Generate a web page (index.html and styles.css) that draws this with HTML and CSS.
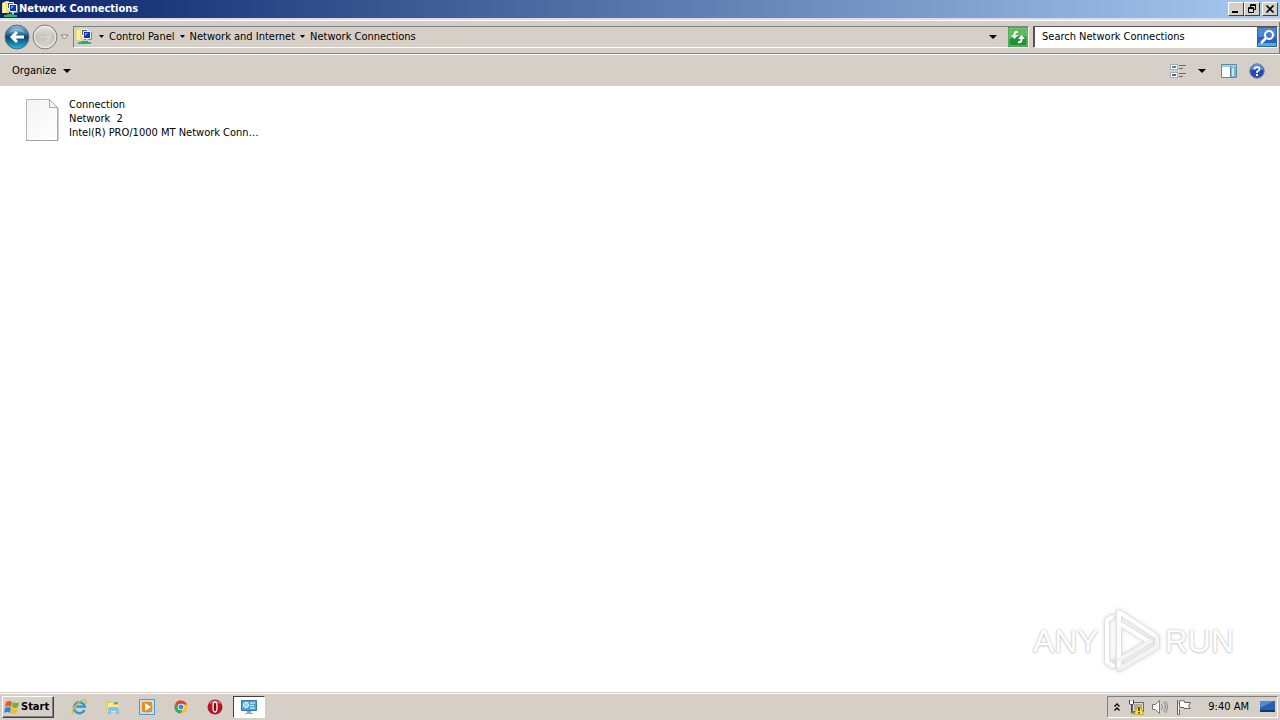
FILE: index.html
```html
<!DOCTYPE html>
<html lang="en">
<head>
<meta charset="utf-8">
<title>Network Connections</title>
<link rel="stylesheet" href="styles.css">
</head>
<body>
<svg class="defs" aria-hidden="true">
  <defs>
    <linearGradient id="blue" x1="0" y1="0" x2="0" y2="1"><stop offset="0" stop-color="#8fb9cf"/><stop offset=".35" stop-color="#2f78a8"/><stop offset=".5" stop-color="#07456f"/><stop offset="1" stop-color="#27b9e0"/></linearGradient>
    <linearGradient id="grey" x1="0" y1="0" x2="0" y2="1"><stop offset="0" stop-color="#e9e8e5"/><stop offset=".5" stop-color="#c3c0bb"/><stop offset="1" stop-color="#dddbd7"/></linearGradient>
    <linearGradient id="paper" x1="0" y1="0" x2="1" y2="1"><stop offset="0" stop-color="#f3f3f3"/><stop offset="1" stop-color="#ffffff"/></linearGradient>
    <symbol id="net" viewBox="0 0 16 17">
      <path d="M0 2 4 0h3v12H0z" fill="#f0dc74"/><path d="M1 2h3v10H1z" fill="#fdf1a0"/>
      <path d="M5.500 1.500h6v6h-6z" fill="#3657c8" stroke="#eef2fa"/>
      <path d="M7.500 3.500h7v7h-7z" fill="#1534b4" stroke="#f2f4fa"/><path d="M9 5h3L9 8z" fill="#6fa0ee"/>
      <path d="M15.500 4v7.500H8" fill="none" stroke="#7787a5"/>
      <path d="M10 11h2v2h-2z" fill="#c9d0d8"/><path d="M2 14h13v2H2z" fill="#39a891"/><path d="M5 13h7v3H5z" fill="#22b45c"/>
    </symbol>
  </defs>
</svg>
<div class="window">
  <header class="titlebar">
    <svg class="title-icon" viewBox="0 0 16 17"><use href="#net"/></svg>
    <h1 class="title">Network Connections</h1>
    <div class="caption">
      <button class="cap" aria-label="Minimize"><svg viewBox="0 0 12 10"><path d="M2 7h6v2H2z"/></svg></button>
      <button class="cap" aria-label="Restore"><svg viewBox="0 0 12 10"><path d="M4.500 3V.5h5v5H8M4 1.500h6" fill="none" stroke="#000"/><path d="M2.500 3.500h5v5h-5zM2 4.500h6" fill="none" stroke="#000"/></svg></button>
      <button class="cap close" aria-label="Close"><svg viewBox="0 0 12 10"><path d="m2.500 1.500 7 7m0-7-7 7" fill="none" stroke="#000" stroke-width="1.600"/></svg></button>
    </div>
  </header>
  <div class="navbar">
    <div class="history">
      <button class="round" aria-label="Back"><svg viewBox="0 0 26 26"><circle cx="13" cy="13" r="12" fill="url(#blue)" stroke="#536d80"/><path d="M5 9a9 9 0 0 1 16 0q-8-3-16 0z" fill="#b9d4e2" opacity=".45"/><path d="M20 13H8m5-5-5 5 5 5" fill="none" stroke="#fff" stroke-width="3"/></svg></button>
      <button class="round" aria-label="Forward"><svg viewBox="0 0 26 26"><circle cx="13" cy="13" r="12" fill="url(#grey)" stroke="#817e7b"/><circle cx="13" cy="13" r="10.500" fill="none" stroke="#efeeec"/><path d="M7 13h12m-5-5 5 5-5 5" fill="none" stroke="#d6d3cf" stroke-width="2"/></svg></button>
      <button class="recent" aria-label="Recent pages"><svg viewBox="0 0 9 6"><path d="M1 1h7L4.500 5z" fill="#f5f4f2" stroke="#85827d"/></svg></button>
    </div>
    <nav class="address" aria-label="Address">
      <svg class="title-icon" viewBox="0 0 16 17"><use href="#net"/></svg>
      <svg class="crumb-arrow first" viewBox="0 0 5 3"><path d="M0 0h5L2.500 3z"/></svg>
      <a class="crumb" href="#">Control Panel</a>
      <svg class="crumb-arrow" viewBox="0 0 5 3"><path d="M0 0h5L2.500 3z"/></svg>
      <a class="crumb" href="#">Network and Internet</a>
      <svg class="crumb-arrow" viewBox="0 0 5 3"><path d="M0 0h5L2.500 3z"/></svg>
      <a class="crumb" href="#">Network Connections</a>
      <button class="drop" aria-label="Previous locations"><svg viewBox="0 0 8 4"><path d="M0 0h8L4 4z"/></svg></button>
      <button class="refresh" aria-label="Refresh"><svg viewBox="0 0 20 20"><path d="M0 0h20v20H0z" fill="#229238"/><path d="M1 1h18v9q-9-2-18 2z" fill="#5abb5f"/><path d="M1 1h18v18H1z" fill="none" stroke="#7dc67e"/><path d="M10 5Q6 4 6.500 9" fill="none" stroke="#fff" stroke-width="2"/><path d="m3 8 3.500 4L10 8z" fill="#fff"/><path d="M10 15q4 1 3.500-4" fill="none" stroke="#fff" stroke-width="2"/><path d="m10 12 3.500-4 3.500 4z" fill="#fff"/></svg></button>
    </nav>
    <form class="search">
      <input class="search-input" type="text" aria-label="Search Network Connections" placeholder="Search Network Connections">
      <button class="search-btn" type="button" aria-label="Search"><svg viewBox="0 0 20 20"><path d="M0 0h20v20H0z" fill="#2b62bd"/><path d="M1 1h18v9H1z" fill="#4e85d3"/><path d="M1 16h18v3H1z" fill="#42b1e4"/><circle cx="12" cy="8" r="4" fill="#477bd0" stroke="#fff" stroke-width="2"/><path d="m9 11-5 5" stroke="#fff" stroke-width="2.500"/></svg></button>
    </form>
  </div>
  <div class="toolbar">
    <button class="organize">Organize <svg class="arrow" viewBox="0 0 8 4"><path d="M0 0h8L4 4z"/></svg></button>
    <div class="tools">
      <button class="tool" aria-label="Change your view"><svg class="ic16" viewBox="0 0 16 16"><path d="M.5 1.500h7v5h-7zM.5 9.500h7v5h-7z" fill="#fff" stroke="#a3acb8"/><path d="M2 3h4v2H2z" fill="#4b83b2"/><path d="M2 11h4v2H2z" fill="#596579"/><path d="M9 2.500h7M9 5.500h4M9 10.500h7M9 13.500h4" stroke="#6f6c6a"/></svg></button>
      <button class="tool view-more" aria-label="More view options"><svg class="arrow" viewBox="0 0 8 4"><path d="M0 0h8L4 4z"/></svg></button>
      <button class="tool" aria-label="Show the preview pane"><svg class="ic16" viewBox="0 0 16 16"><path d="M.5 1.500h15v13H.5z" fill="#fff" stroke="#5789a8"/><path d="M1 2h14v2H1z" fill="#a9cde0"/><path d="M10 4h5v10h-5z" fill="#77b6d8"/><path d="M11 5h2v8h-2z" fill="#c7e5f4"/><path d="M9.500 3v12" stroke="#5789a8"/></svg></button>
      <button class="tool" aria-label="Get help"><svg class="ic16" viewBox="0 0 16 16"><circle cx="8" cy="8" r="7.200" fill="#234bac" stroke="#777e99"/><path d="M2 7a6 6 0 0 1 12 0Q8 5 2 7z" fill="#6b90dc"/><path d="M5.500 6.500Q5.500 4 8 4t2.500 2.200Q10.500 7.500 8 8.500V10" fill="none" stroke="#fff" stroke-width="1.700"/><path d="M7 11h2v2H7z" fill="#fff"/></svg></button>
    </div>
  </div>
  <main class="content">
    <a class="item" href="#">
      <svg class="file" viewBox="0 0 34 44"><path d="M1.500 1.500h23l8 8v33h-31z" fill="url(#paper)" stroke="#b5b5b5"/><path d="M1 42.500h32V10" fill="none" stroke="#a2a2a2"/><path d="M24.500 1.500v8h8z" fill="#f4f4f4" stroke="#a9a9a9"/></svg>
      <span class="lines"><span>Connection</span><span>Network&nbsp; 2</span><span>Intel(R) PRO/1000 MT Network Conn…</span></span>
    </a>
    <div class="watermark">
      <span class="word">ANY</span>
      <svg class="play" viewBox="0 0 60 66"><g fill="none" stroke-linejoin="round" stroke-linecap="round"><path id="play-lines" d="M10 9 5 12v42l6 4M17 58V4l38 25M17 15l29 18M17 61l38-22V29M13 54l36-21" stroke="#e0e0e0" stroke-width="6"/><path d="M10 9 5 12v42l6 4M17 58V4l38 25M17 15l29 18" stroke="#fff" stroke-width="4"/><path d="M17 61l38-22V29M17 52l32-19" stroke="#f4f4f4" stroke-width="4"/></g></svg>
      <span class="word">RUN</span>
    </div>
  </main>
  <footer class="taskbar">
    <button class="start"><svg class="ic16" viewBox="0 0 16 16"><path d="M2 3q3-2 6 0L7 8Q4 6 1 8z" fill="#ed5a24"/><path d="M9 3q3 2 6 0l-1 5q-3 2-6 0z" fill="#76b52b"/><path d="M1 9q3-2 6 0l-1 5q-3-2-6 0z" fill="#278cd5"/><path d="M8 9q3 2 6 0l-1 5q-3 2-6 0z" fill="#f8bd24"/></svg>Start</button>
    <div class="launch">
      <button class="app" aria-label="Internet Explorer"><svg class="ic16" viewBox="0 0 16 16"><path d="M13.500 11a5.500 5.500 0 1 1 .3-3.500H5" fill="none" stroke="#299bd8" stroke-width="2.400"/><path d="M2 15C-1 12 9 0 14 1q2 1 0 4" fill="none" stroke="#e6b838" stroke-width="1.400"/></svg></button>
      <button class="app" aria-label="File Explorer"><svg class="ic16" viewBox="0 0 16 16"><path d="M1 2h5l1 2h7v9H1z" fill="#e7ca65"/><path d="M3 4h5v2h6v7H2z" fill="#faeaa4"/><path d="M9 3h4v2H9z" fill="#67b74f"/><path d="M3 15v-5q0-2 2-2h7q2 0 2 2v5h-3v-3H6v3z" fill="#7fc5e8"/></svg></button>
      <button class="app" aria-label="Media Player"><svg class="ic16" viewBox="0 0 16 16"><path d="M.5.5h15v15H.5z" fill="#c5e1f2" stroke="#4b98ca"/><path d="M3 3h10v10H3z" fill="#ef8d20"/><circle cx="8" cy="8" r="5.500" fill="#f18b18"/><path d="m6 4 6 4-6 4z" fill="#fff"/></svg></button>
      <button class="app" aria-label="Chrome"><svg class="ic16" viewBox="0 0 16 16"><circle cx="8" cy="8" r="6.500" fill="#f5c52c"/><path d="M2.400 4.500A6.500 6.500 0 0 1 14 5.500H8L5 9z" fill="#db4437"/><path d="M2.400 4.500A6.500 6.500 0 0 0 7.500 14.500L10 10H6z" fill="#3da558"/><circle cx="8" cy="8" r="3.300" fill="#fff"/><circle cx="8" cy="8" r="2.500" fill="#4285dc"/></svg></button>
      <button class="app" aria-label="Opera"><svg class="ic16" viewBox="0 0 16 16"><circle cx="8" cy="8" r="7.500" fill="#b51622"/><path d="M2 5a7 7 0 0 1 12 0Q8 3 2 5z" fill="#e56a6c"/><ellipse cx="8" cy="8" rx="2" ry="5" fill="#7b0c13" stroke="#fff" stroke-width="1.300"/></svg></button>
      <button class="app active" aria-label="Network Connections"><svg class="ic16" viewBox="0 0 16 16"><path d="M.5 1.500h15v10H.5z" fill="#48a3d8" stroke="#3479a9"/><circle cx="5" cy="6" r="2.500" fill="#8acdf0" stroke="#fff"/><path d="M9 4h5M9 6.500h4M9 9h5" stroke="#fff"/><path d="M6 12h4v2h2v1H4v-1h2z" fill="#83abc4"/></svg></button>
    </div>
    <div class="tray">
      <button class="mini" aria-label="Show hidden icons"><svg class="chev" viewBox="0 0 6 8"><path d="M.5 3.500 3 1l2.500 2.500M.5 7.500 3 5l2.500 2.500" fill="none" stroke="#000" stroke-width="1.300"/></svg></button>
      <button class="mini" aria-label="Network status"><svg class="ic16" viewBox="0 0 16 16"><path d="M4.500 3.500h11v9h-11z" fill="#ddd" stroke="#666"/><path d="M6 5h8v6H6z" fill="#aaa"/><path d="M1.500 1v4h4V1M3.500 5v9H8" fill="none" stroke="#444"/><path d="M2 2h3v3H2z" fill="#fff"/><path d="m11 5 5 10.500H6z" fill="#f8df35" stroke="#b59a13" stroke-width=".6"/><path d="M11 8v4m0 1v1.500" stroke="#222" stroke-width="1.400"/></svg></button>
      <button class="mini" aria-label="Volume"><svg class="ic16" viewBox="0 0 16 16"><path d="M.5 5.500h3l4-4v13l-4-4h-3z" fill="#fff" stroke="#777"/><path d="M9.500 5q2 3 0 6M11.500 3q4 5 0 10M13.500 2q4 6 0 12" fill="none" stroke="#888"/></svg></button>
      <button class="mini" aria-label="Action Center"><svg class="ic16" viewBox="0 0 16 16"><path d="M1.500 1v14.500h2V10M3.500 2q3-1 5 0v1.500h6L12.500 7l2 2.500H8V8.500H3.500z" fill="#fff" stroke="#666"/></svg></button>
      <time class="clock">9:40 AM</time>
      <button class="mini" aria-label="Show desktop"><svg class="ic16" viewBox="0 0 16 16"><path d="M1 2h15v9H1z" fill="#285fae"/><path d="M1 2h14L1 9z" fill="#4f8bd5"/><path d="M1 11h15v2H1z" fill="#15366d"/></svg></button>
    </div>
  </footer>
</div>
</body>
</html>
```
FILE: styles.css
```css
* { box-sizing: border-box; }
body {
  margin: 0;
  background: #d4d0c8;
  color: #000;
  font: 11px/14px "DejaVu Sans Condensed", Tahoma, "Noto Sans", sans-serif;
}
button { margin: 0; padding: 0; border: 0; background: none; color: inherit; font: inherit; }
svg { display: block; flex: none; }
a { color: inherit; text-decoration: none; }
.defs { position: absolute; width: 0; height: 0; }
.window { display: flex; flex-direction: column; min-height: 100vh; }
.titlebar {
  display: flex; align-items: center; height: 18px; padding: 0 2px;
  background: linear-gradient(90deg, #0a246a, #a6caf0);
}
.title-icon { width: 16px; height: 17px; }
.title { flex: 1; margin: 0; padding-left: 1px; color: #fff; font-size: 11px; line-height: 18px; }
.caption { display: flex; }
.cap {
  width: 16px; height: 14px; padding: 1px; background: #d4d0c8;
  border: 1px solid; border-color: #fff #404040 #404040 #fff;
}
.cap svg { width: 12px; height: 10px; }
.close { margin-left: 2px; }
.navbar {
  display: flex; align-items: center; gap: 4px; height: 36px;
  padding: 0 2px 0 4px; background: #d6cfc8;
  border-top: 2px solid #dedcec; border-bottom: 1px solid #858381;
  box-shadow: inset 0 1px #fff, inset 0 2px #d6cfc8, inset -1px 0 #77736e;
}
.history { display: flex; align-items: center; gap: 2px; }
.round { width: 26px; height: 26px; }
.recent { width: 9px; height: 6px; }
.address {
  display: flex; flex: 1; align-items: center; height: 22px; padding-left: 2px;
  border: 1px solid; border-color: #7c8180 #fff #fff #7c8180;
}
.crumb { white-space: nowrap; }
.crumb-arrow { width: 5px; height: 3px; margin: 0 5px; }
.crumb-arrow.first { margin-left: 7px; }
.drop { width: 8px; height: 4px; margin: 0 11px 0 auto; }
.refresh { width: 20px; height: 20px; }
.search {
  display: flex; width: 245px; height: 22px; background: #fff;
  border: 1px solid; border-color: #55534f #fff #fff #55534f;
}
.search-input {
  flex: 1; min-width: 0; padding: 0 7px; border: 0; border-left: 1px solid #55534f; outline: 0;
  background: #fff; color: #000; font: inherit;
}
.search-input::placeholder { color: #000; opacity: 1; }
.search-btn { width: 20px; height: 20px; }
.toolbar {
  display: flex; justify-content: space-between; align-items: center; height: 32px;
  padding: 0 15px 0 12px; background: #d6cfc8; border-top: 1px solid #fff;
}
.organize { display: flex; align-items: center; gap: 7px; }
.arrow { width: 8px; height: 4px; }
.tools { display: flex; align-items: center; gap: 12px; }
.view-more { margin-right: 3px; }
.ic16 { width: 16px; height: 16px; }
.content {
  display: flex; flex: 1; flex-direction: column; justify-content: space-between;
  padding: 12px 46px 18px 25px; background: #fff;
}
.item { display: flex; gap: 10px; align-self: flex-start; }
.file { width: 34px; height: 44px; }
.lines { display: flex; flex-direction: column; white-space: nowrap; }
.watermark { display: flex; align-items: center; gap: 3px; align-self: flex-end; }
.word {
  color: #fff; font: 32px/44px "Liberation Sans", sans-serif;
  text-shadow: 0 0 1px #c4c4c4, 0 0 3px #cccccc, 0 1px 2px #d4d4d4;
}
.play { width: 60px; height: 66px; filter: drop-shadow(0 0 2px #dddddd); }
.taskbar {
  display: flex; align-items: center; height: 28px; padding: 2px 2px 1px;
  background: #d6cfc8; border-top: 1px solid #d6cfc8; box-shadow: inset 0 1px #fff;
}
.start {
  display: flex; align-items: center; gap: 1px; width: 52px; height: 22px; padding-left: 1px;
  border: 1px solid; border-color: #fff #404040 #404040 #fff;
  box-shadow: inset -1px -1px #808080; font-weight: bold;
}
.launch { display: flex; align-items: center; margin-left: 9px; gap: 2px; }
.app { display: grid; place-items: center; width: 32px; height: 22px; }
.active { background: #fff; border: 1px solid; border-color: #404040 #fff #fff #404040; }
.tray {
  display: flex; align-items: center; gap: 8px; height: 22px; margin-left: auto; padding: 0 2px 0 6px;
  border: 1px solid; border-color: #808080 #fff #fff #808080;
}
.chev { width: 6px; height: 8px; }
.clock { margin: 0 2px 0 8px; white-space: nowrap; }
```
